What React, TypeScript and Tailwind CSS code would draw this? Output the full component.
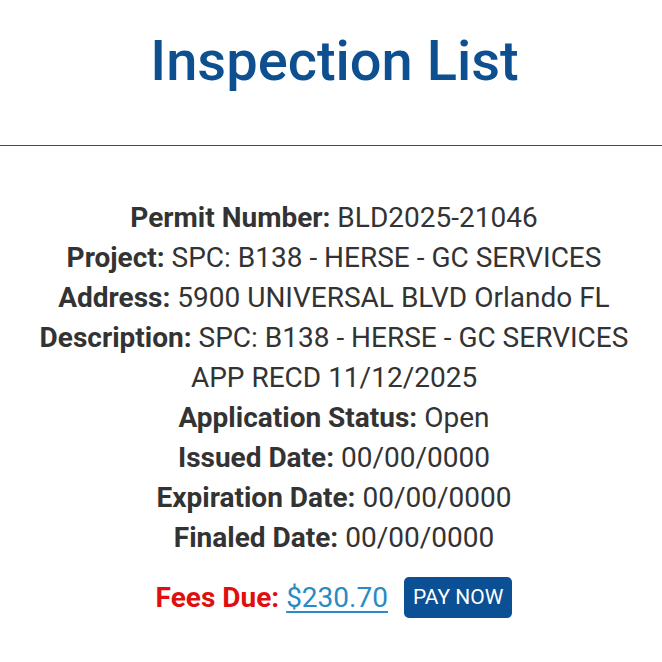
import React from 'react';

const rows: { label: string; value: string }[] = [
  { label: 'Permit Number:', value: 'BLD2025-21046' },
  { label: 'Project:', value: 'SPC: B138 - HERSE - GC SERVICES' },
  { label: 'Address:', value: '5900 UNIVERSAL BLVD Orlando FL' },
  { label: 'Description:', value: 'SPC: B138 - HERSE - GC SERVICES APP RECD 11/12/2025' },
  { label: 'Application Status:', value: 'Open' },
  { label: 'Issued Date:', value: '00/00/0000' },
  { label: 'Expiration Date:', value: '00/00/0000' },
  { label: 'Finaled Date:', value: '00/00/0000' },
];

export default function App() {
  return (
    <div className="min-h-[662px] bg-white font-['Roboto',sans-serif]">
      {/* Header */}
      <div className="pl-[7px] pt-[25px] pb-[48px] border-b border-[#14588f]">
        <h1 className="text-center text-[56px] leading-[72px] font-medium text-[#0d4f8f]">Inspection List</h1>
      </div>

      {/* Permit details */}
      <div className="pl-[38px] pr-[32px] pt-[52px] text-center text-[28px] leading-[40px] text-[#333333]">
        {rows.map(row => (
          <div key={row.label}>
            <span className="font-bold">{row.label}</span> {row.value}
          </div>
        ))}

        <div className="mt-[19px] flex items-center justify-center gap-[16px]">
          <span className="font-bold text-[#e00f0f]">
            Fees Due: <a href="#" className="font-normal text-[#2a8ac4] underline underline-offset-[4px] decoration-[2px]">$230.70</a>
          </span>
          <button className="h-[41px] px-[9px] rounded-[5px] bg-[#0b4f94] text-white text-[21px] leading-none">
            PAY NOW
          </button>
        </div>
      </div>
    </div>
  );
}
